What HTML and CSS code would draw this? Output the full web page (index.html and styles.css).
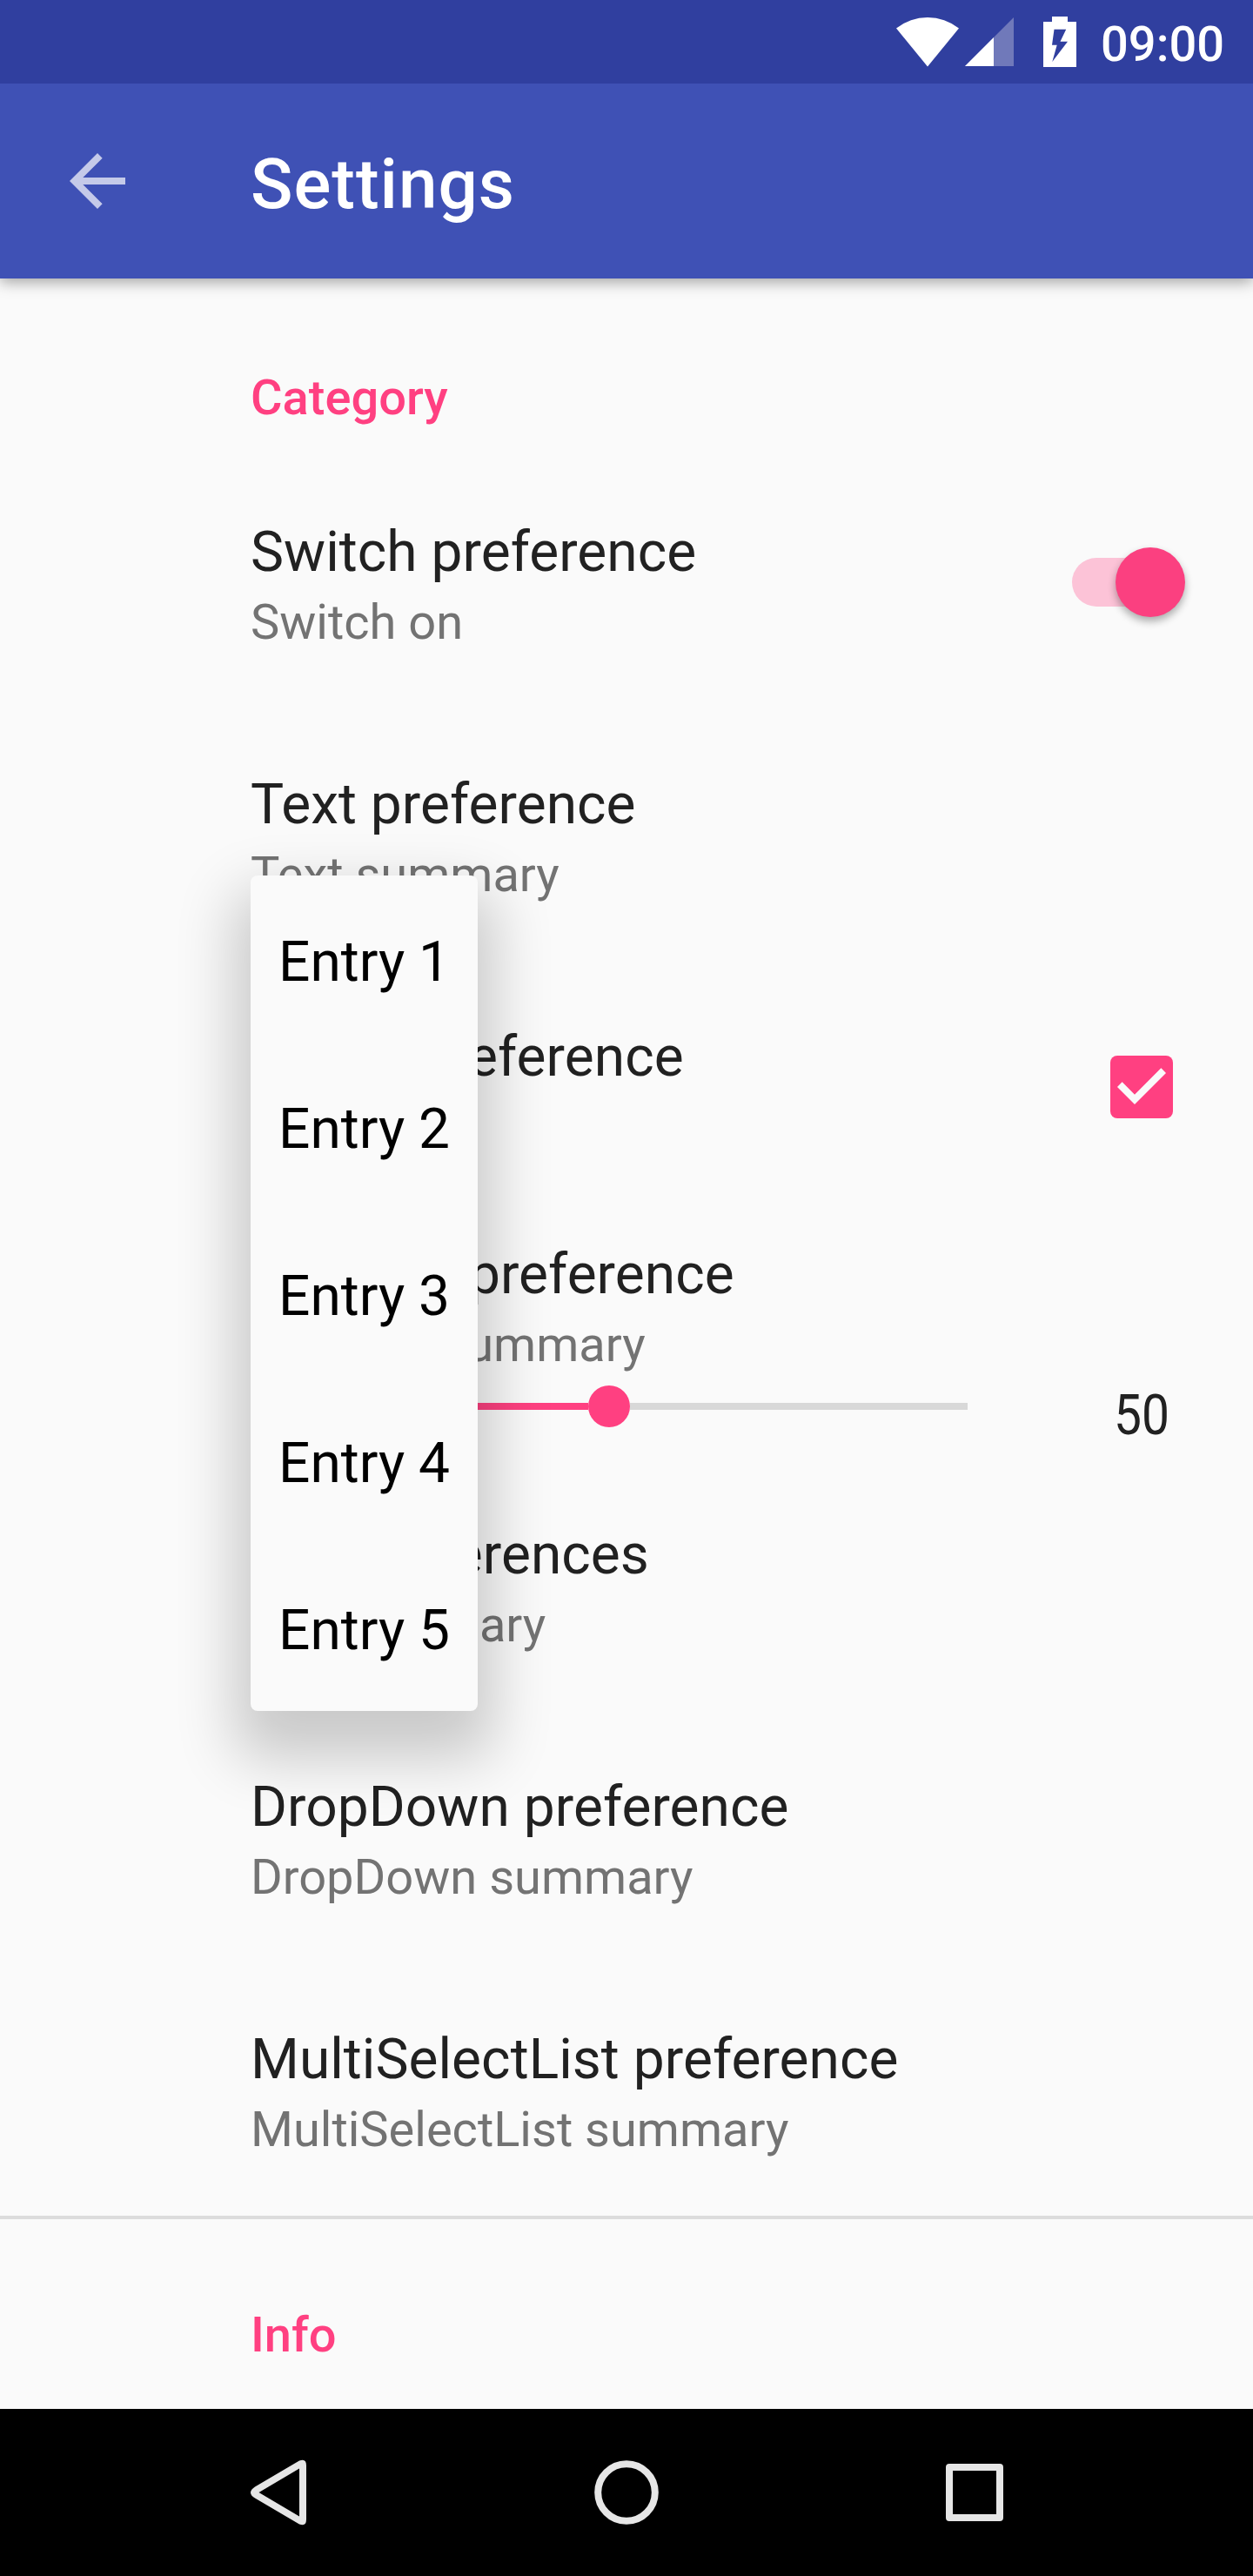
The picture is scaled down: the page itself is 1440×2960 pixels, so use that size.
FILE: index.html
```html
<!DOCTYPE html>
<html lang="en">
<head>
<meta charset="utf-8">
<title>Settings</title>
<link rel="stylesheet" href="styles.css">
</head>
<body>
<div class="screen">
  <header class="status-bar">
    <svg class="status-icons" width="210" height="96" viewBox="1030 0 210 96">
      <path fill="#fff" d="M1030 32.5A58 58 0 0 1 1102 32.5L1066 76.5z"/>
      <path fill="#7079ba" d="M1109 76L1165 20V76z"/>
      <path fill="#fff" d="M1109 76L1142 43V76z"/>
      <path fill="#fff" fill-rule="evenodd" d="M1209 19h18v6h10v52h-38V25h10zM1211.500 33.700L1209 51.700H1214.700L1209.300 71L1227 47.800H1218.500L1225.200 33.700z"/>
    </svg>
    <span class="clock">09:00</span>
  </header>
  <div class="toolbar">
    <svg class="back" width="96" height="96" viewBox="0 0 24 24"><path fill="#c5cae9" d="M20 11H7.830l5.590-5.590L12 4l-8 8 8 8 1.410-1.410L7.830 13H20z"/></svg>
    <h1 class="toolbar-title">Settings</h1>
  </div>
  <main class="preferences">
    <h2 class="category">Category</h2>
    <div class="row">
      <div class="texts"><div class="title">Switch preference</div><div class="summary">Switch on</div></div>
      <div class="switch"><div class="switch-track"></div><div class="switch-thumb"></div></div>
    </div>
    <div class="row">
      <div class="texts"><div class="title">Text preference</div><div class="summary">Text summary</div></div>
    </div>
    <div class="row">
      <div class="texts"><div class="title">Check preference</div><div class="summary">Checked</div></div>
      <svg class="checkbox" width="72" height="72" viewBox="3 3 18 18"><rect x="3" y="3" width="18" height="18" rx="2" fill="#ff4081"/><path fill="#fafafa" d="M10 17l-5-5 1.410-1.410L10 14.170l7.590-7.590L19 8z"/></svg>
    </div>
    <div class="row seek-row">
      <div class="texts"><div class="title">SeekBar preference</div><div class="summary">SeekBar summary</div></div>
      <div class="seek">
        <div class="slider"><div class="slider-fill"></div><div class="slider-thumb"></div><div class="slider-rest"></div></div>
        <span class="seek-value">50</span>
      </div>
    </div>
    <div class="row">
      <div class="texts"><div class="title">List preferences</div><div class="summary">List summary</div></div>
    </div>
    <div class="row">
      <div class="texts"><div class="title">DropDown preference</div><div class="summary">DropDown summary</div></div>
    </div>
    <div class="row">
      <div class="texts"><div class="title">MultiSelectList preference</div><div class="summary">MultiSelectList summary</div></div>
    </div>
    <h2 class="category divided">Info</h2>
  </main>
  <nav class="nav-bar">
    <svg width="80" height="80" viewBox="280 2824 80 80"><path fill="#e6e6e6" fill-rule="evenodd" d="M293 2857.400L344 2827.600Q352 2824.500 352 2833V2895Q352 2903.500 344 2900.400L293 2870.600Q283 2864 293 2857.400zM297.500 2864L344 2891.500V2836.500z"/></svg>
    <svg width="80" height="80" viewBox="0 0 80 80"><circle cx="40" cy="40" r="32.800" fill="none" stroke="#e6e6e6" stroke-width="8"/></svg>
    <svg width="80" height="80" viewBox="0 0 80 80"><path fill="#e6e6e6" fill-rule="evenodd" d="M11 7H69Q73 7 73 11V69Q73 73 69 73H11Q7 73 7 69V11Q7 7 11 7zM15 15V65H65V15z"/></svg>
  </nav>
  <div class="popup">
    <div class="entry">Entry 1</div>
    <div class="entry">Entry 2</div>
    <div class="entry">Entry 3</div>
    <div class="entry">Entry 4</div>
    <div class="entry">Entry 5</div>
  </div>
</div>
</body>
</html>
```
FILE: styles.css
```css
* { box-sizing: border-box; }
body { margin: 0; background: #fafafa; font-family: Roboto, sans-serif; }
svg { display: block; }
.screen {
  position: relative;
  display: flex;
  flex-direction: column;
  width: 1440px;
  height: 2960px;
  overflow: hidden;
  background: #fafafa;
}
.status-bar {
  position: relative;
  z-index: 1;
  display: flex;
  align-items: center;
  gap: 25px;
  height: 96px;
  padding-left: 1030px;
  background: #303f9f;
  color: #fff;
}
.status-icons { flex: none; }
.clock { font-size: 56px; font-weight: 500; line-height: 96px; padding-top: 5px; }
.toolbar {
  display: flex;
  align-items: center;
  gap: 128px;
  height: 224px;
  padding-left: 64px;
  background: #3f51b5;
  box-shadow: 0 4px 16px rgba(0, 0, 0, .36);
}
.toolbar-title { margin: 0; padding-top: 8px; font-size: 80px; font-weight: 500; letter-spacing: 1px; line-height: 100px; color: #fff; }
.preferences { flex: 1; }
.category {
  height: 204px;
  margin: 0;
  padding: 99px 0 0 288px;
  font-size: 56px;
  font-weight: 500;
  line-height: 76px;
  color: #ff4081;
}
.divided { padding-top: 95px; border-top: 4px solid #dcdcdc; }
.row {
  display: flex;
  align-items: center;
  justify-content: space-between;
  height: 290px;
  padding: 64px 78px 64px 288px;
  white-space: nowrap;
}
.texts { align-self: flex-start; }
.title { font-size: 64px; line-height: 94px; letter-spacing: .05px; color: #212121; }
.summary { font-size: 56px; line-height: 66px; color: #737373; }
.switch { display: flex; align-items: center; width: 130px; height: 80px; }
.switch-track { width: 110px; height: 56px; border-radius: 28px; background: #fcc3d7; }
.switch-thumb {
  width: 80px;
  height: 80px;
  margin-left: -60px;
  border-radius: 50%;
  background: #fb4080;
  box-shadow: 0 5px 10px rgba(0, 0, 0, .32);
}
.checkbox { margin-right: 14px; }
.seek-row {
  flex-direction: column;
  align-items: stretch;
  justify-content: flex-start;
  gap: 14px;
  height: 282px;
  padding-top: 24px;
  padding-bottom: 0;
}
.seek { display: flex; align-items: center; gap: 164px; height: 48px; }
.slider { display: flex; align-items: center; width: 824px; }
.slider-fill { width: 388px; height: 8px; background: #ff4081; }
.slider-thumb { width: 48px; height: 48px; border-radius: 50%; background: #ff4081; }
.slider-rest { flex: 1; height: 8px; background: #d8d8d8; }
.seek-value { padding-top: 22px; font-size: 64px; line-height: 76px; color: #212121; transform: scaleX(.89); }
.nav-bar {
  display: grid;
  grid-template-columns: repeat(3, 400px);
  place-items: center;
  height: 192px;
  padding: 0 120px;
  background: #000;
}
.popup {
  position: absolute;
  left: 288px;
  top: 1006px;
  width: 261px;
  border-radius: 8px;
  background: #fafafa;
  box-shadow: 0 36px 68px 18px rgba(0, 0, 0, .2);
}
.entry { height: 192px; padding: 4px 0 0 32px; font-size: 64px; line-height: 192px; color: #000; white-space: nowrap; }
```
